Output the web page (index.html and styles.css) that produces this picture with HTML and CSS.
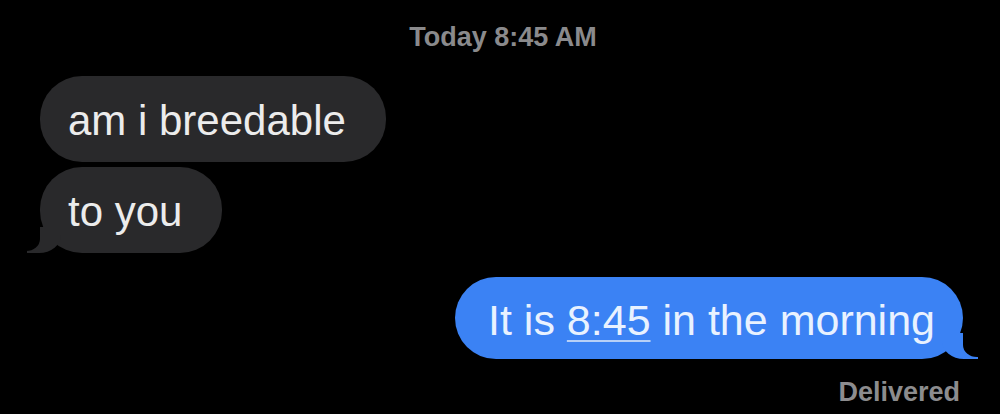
FILE: index.html
```html
<!DOCTYPE html>
<html lang="en">
<head>
    <meta charset="UTF-8">
    <meta name="viewport" content="width=device-width, initial-scale=1.0">
    <title>Messages</title>
    <link rel="stylesheet" href="styles.css">
</head>
<body>
    <div class="thread">
        <div class="stamp">Today 8:45 AM</div>

        <div class="group them">
            <div class="bubble">am i breedable</div>
            <div class="bubble tail">to you</div>
        </div>

        <div class="group me">
            <div class="bubble tail">It is <span class="link">8:45</span> in the morning</div>
        </div>

        <div class="status">Delivered</div>
    </div>
</body>
</html>
```

FILE: styles.css
```css
/* Dark message thread */
body {
    background-color: #000000;
    margin: 0;
    font-family: "Liberation Sans", Arial, sans-serif;
}
.thread {
    display: flex;
    flex-direction: column;
    padding: 21px 0 0;
}
.stamp {
    text-align: center;
    color: #8a8a8c;
    font-size: 27px;
    font-weight: bold;
    line-height: 1.2;
    padding-left: 6px;
    margin-bottom: 23px;
}
.group {
    display: flex;
    flex-direction: column;
    gap: 5px;
}
.group.them {
    align-items: flex-start;
    padding-left: 40px;
}
.group.me {
    align-items: flex-end;
    padding-right: 37px;
    margin-top: 24px;
}
.bubble {
    position: relative;
    font-size: 42px;
    line-height: 49px;
    border-radius: 42px;
    padding: 20px 40px 17px 28px;
}
.them .bubble {
    background: #29292b;
    color: #ececec;
}
.me .bubble {
    background: #3b82f4;
    color: #e9f2ff;
    font-size: 43px;
    padding: 19px 28px 14px 33px;
}
.link {
    text-decoration: underline;
    text-decoration-color: #b7d0f7;
    text-decoration-thickness: 2px;
    text-underline-offset: 5px;
}

/* little tails on the last bubble of a group */
.bubble.tail::before,
.bubble.tail::after {
    content: "";
    position: absolute;
    bottom: 0;
    height: 26px;
}
.them .bubble.tail::before {
    left: -13px;
    width: 34px;
    background: #29292b;
    border-bottom-right-radius: 22px 18px;
}
.them .bubble.tail::after {
    left: -26px;
    width: 26px;
    background: #000000;
    border-bottom-right-radius: 14px 12px;
    bottom: 2px;
}
.me .bubble.tail::before {
    right: -15px;
    width: 36px;
    background: #3b82f4;
    border-bottom-left-radius: 22px 18px;
}
.me .bubble.tail::after {
    right: -28px;
    width: 28px;
    background: #000000;
    border-bottom-left-radius: 14px 12px;
    bottom: 2px;
}
.status {
    align-self: flex-end;
    padding-right: 40px;
    margin-top: 17px;
    color: #8c8c8e;
    font-size: 27px;
    font-weight: bold;
    line-height: 1.2;
}
```
